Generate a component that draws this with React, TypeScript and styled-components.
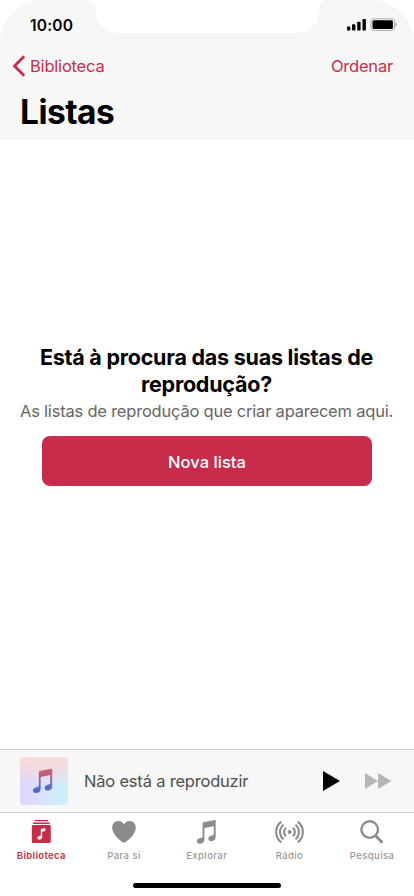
import React from 'react';
import styled, { createGlobalStyle } from 'styled-components';

const accent = '#c72d4b';

const GlobalStyle = createGlobalStyle`
  * { box-sizing: border-box; }
  body { margin: 0; background: #fff; }
`;

const Screen = styled.div`
  width: 414px;
  height: 896px;
  display: flex;
  flex-direction: column;
  background: #fff;
  overflow: hidden;
  font-family: Inter, 'Liberation Sans', sans-serif;
  color: #000;
  svg { display: block; flex: none; }
`;

const Header = styled.header`
  position: relative;
  height: 140px;
  flex: none;
  background: #f7f7f7;
  border-radius: 43px 43px 0 0;
`;

const Notch = styled.svg`
  position: absolute;
  left: 80px;
  top: 0;
`;

const Label = styled.span<{ $size: number; $track?: number; $weight?: number; $color?: string }>`
  font-size: ${p => p.$size}px;
  font-weight: ${p => p.$weight ?? 400};
  letter-spacing: ${p => p.$track ?? 0}px;
  color: ${p => p.$color ?? '#000'};
  white-space: nowrap;
`;

const StatusBar = styled.div`
  height: 50px;
  padding: 0 17px 0 30px;
  display: flex;
  align-items: center;
  justify-content: space-between;
`;

const NavBar = styled.nav`
  height: 32px;
  padding: 0 21px 0 12px;
  display: flex;
  align-items: center;
  justify-content: space-between;
`;

const TextButton = styled.button`
  display: flex;
  align-items: center;
  gap: 4px;
  padding: 0;
  border: 0;
  background: none;
  font-family: inherit;
`;

const Title = styled.h1`
  margin: 0;
  padding-left: 20px;
  font-size: 33.5px;
  line-height: 61px;
  font-weight: 700;
  letter-spacing: -0.55px;
`;

const Content = styled.main`
  height: 609px;
  padding-top: 204px;
  flex: none;
  display: flex;
  flex-direction: column;
  align-items: center;
`;

const Heading = styled.h2`
  margin: 0;
  font-size: 21.5px;
  line-height: 27px;
  font-weight: 700;
  letter-spacing: -0.24px;
  text-align: center;
  white-space: nowrap;
  padding-right: 1px;
`;

const Hint = styled.p`
  margin: 0;
  height: 38px;
  line-height: 26px;
  padding-right: 1px;
`;

const PrimaryButton = styled.button`
  width: 330px;
  height: 50px;
  padding: 1px 0 0;
  border: 0;
  border-radius: 8px;
  background: ${accent};
  font-family: inherit;
`;

const Player = styled.section`
  height: 64px;
  flex: none;
  padding: 0 22px 0 20px;
  border-top: 1px solid #cbcbcb;
  border-bottom: 1px solid #cbcbcb;
  background: #f7f7f7;
  display: flex;
  align-items: center;
`;

const Artwork = styled.div`
  width: 48px;
  height: 48px;
  margin-right: 16px;
  border-radius: 3px;
  background:
    linear-gradient(180deg, #f9dcd6 0%, rgba(246, 218, 222, .85) 22%, rgba(240, 220, 235, 0) 60%),
    linear-gradient(100deg, #dad6fd 5%, #dfdcff 40%, #cbf0fa 90%);
`;

const Controls = styled.div`
  margin-left: auto;
  display: flex;
  align-items: center;
  gap: 25px;
`;

const Tabs = styled.nav`
  height: 70px;
  flex: none;
  display: flex;
`;

const Tab = styled.div`
  width: 82.7px;
  height: 50px;
  padding-top: 5px;
  display: flex;
  flex-direction: column;
  align-items: center;
  gap: 3px;
`;

const TabText = styled.span<{ $active?: boolean; $track: number }>`
  font-size: 9.5px;
  line-height: 13px;
  font-weight: ${p => (p.$active ? 600 : 500)};
  letter-spacing: ${p => p.$track}px;
  color: ${p => (p.$active ? accent : '#999')};
`;

const HomeIndicator = styled.div`
  width: 148px;
  height: 5px;
  flex: none;
  margin-left: 133px;
  border-radius: 3px;
  background: #000;
`;

const notePath =
  'M19.6 .1V17.1C19.6 19.8 17.7 21.1 15.5 21.3C13.4 21.4 12.1 20.1 12.2 18.5C12.3 16.6 13.8 15.8 15.9 15.4C17.2 15.1 17.7 14.8 17.7 13.3V6.2L8.3 8.1V19.5C8.3 22.2 6.3 23.6 4 23.8C2 23.9 .6 22.7 .7 21.1C.8 19.2 2.3 18.4 4.3 18C5.9 17.7 6.5 17.4 6.5 15.9V3.2C6.5 2.6 6.8 2.4 7.4 2.2L18.7 0C19.2 -.1 19.6 -.1 19.6 .1Z';

const LibraryIcon = () => (
  <svg width="28" height="28" viewBox="0 0 28 28" fill={accent}>
    <path d="M7.3 3q0-1 1-1h12q1 0 1 1v.3h-14zM5.8 5.4q0-1 1-1h15q1 0 1 1v.5h-17z" />
    <rect x="4.8" y="7" width="19" height="18" rx="1.6" />
    <path d="M18.3 10.1V13.1L15.2 13.8V18.7C15.2 20.5 14 21.6 12.4 21.6C11.2 21.6 10.4 20.8 10.5 19.9C10.6 18.8 11.5 18.3 12.6 18C13.5 17.8 13.8 17.6 13.8 16.8V11.6Q13.8 11.1 14.2 11L17.9 10.1Q18.3 10 18.3 10.1Z" fill="#fff" />
  </svg>
);
const HeartIcon = () => (
  <svg width="28" height="28" viewBox="0 0 28 28" fill="#8b8b8b">
    <path d="M14 25C12.8 25 2.2 17.1 2.2 9.6C2.2 5.7 4.9 3 8.4 3C10.9 3 13 4.4 14 6.6C15 4.4 17.1 3 19.6 3C23.1 3 25.8 5.7 25.8 9.6C25.8 17.1 15.2 25 14 25Z" />
  </svg>
);
const ExploreIcon = () => (
  <svg width="28" height="28" viewBox="0 0 28 28">
    <path transform="translate(3.1 2)" fill="#8b8b8b" d={notePath} />
  </svg>
);
const RadioIcon = () => (
  <svg width="30" height="28" viewBox="-15.5 -14 30 28" fill="none" stroke="#8b8b8b" strokeWidth="2.1">
    <circle r="2" fill="#8b8b8b" stroke="none" />
    <path d="M-3.4-4.2a5.4 5.4 0 0 0 0 8.4M3.4-4.2a5.4 5.4 0 0 1 0 8.4M-5.9-7.3a9.3 9.3 0 0 0 0 14.6M5.9-7.3a9.3 9.3 0 0 1 0 14.6M-8.2-10.4a13.1 13.1 0 0 0 0 20.8M8.2-10.4a13.1 13.1 0 0 1 0 20.8" />
  </svg>
);
const SearchIcon = () => (
  <svg width="28" height="28" viewBox="0 0 28 28" fill="none" stroke="#8b8b8b" strokeWidth="2.4">
    <circle cx="11.7" cy="11.6" r="8.3" />
    <path d="M17.6 17.7L24.5 24.7" strokeWidth="2.8" />
  </svg>
);

const tabs = [
  { name: 'Biblioteca', icon: <LibraryIcon />, active: true, track: 0.38 },
  { name: 'Para si', icon: <HeartIcon />, track: 0.45 },
  { name: 'Explorar', icon: <ExploreIcon />, track: 0.42 },
  { name: 'Rádio', icon: <RadioIcon />, track: 0.4 },
  { name: 'Pesquisa', icon: <SearchIcon />, track: 0.42 },
];

export default function App() {
  return (
    <Screen>
      <GlobalStyle />
      <Header>
        <Notch width="254" height="34" viewBox="0 0 254 34" fill="#fff">
          <path d="M5 0H249Q239 0 239 11C239 24 230 33.3 214 33.3H40C25 33.3 15.5 24 15.5 11Q15.5 0 5 0Z" />
        </Notch>
        <StatusBar>
          <Label $size={15.5} $weight={600} $track={0.2}>10:00</Label>
          <svg width="50" height="14" viewBox="347 18 50 14">
            <rect x="347" y="26.6" width="3.4" height="4" rx=".8" />
            <rect x="352" y="24.3" width="3.4" height="6.3" rx=".8" />
            <rect x="357.2" y="21.8" width="3.4" height="8.8" rx=".8" />
            <rect x="362.5" y="19" width="3.4" height="11.6" rx=".8" />
            <rect x="371" y="18.8" width="23.6" height="11.6" rx="3" fill="none" stroke="#aaa" />
            <rect x="372.5" y="20.3" width="20.4" height="8.8" rx="1.5" />
            <path d="M395.5 22.6q1.5.6 1.5 2t-1.5 2z" fill="#aaa" />
          </svg>
        </StatusBar>
        <NavBar>
          <TextButton>
            <svg width="14" height="22" viewBox="0 0 14 22" fill="none" stroke={accent} strokeWidth="2.8">
              <path d="M12.2 1.3L2.5 11L12.2 20.7" />
            </svg>
            <Label $size={16.5} $track={-0.2} $color={accent}>Biblioteca</Label>
          </TextButton>
          <TextButton><Label $size={16.5} $track={-0.2} $color={accent}>Ordenar</Label></TextButton>
        </NavBar>
        <Title>Listas</Title>
      </Header>
      <Content>
        <Heading>Está à procura das suas listas de<br />reprodução?</Heading>
        <Hint><Label $size={16.5} $track={-0.21} $color="#666">As listas de reprodução que criar aparecem aqui.</Label></Hint>
        <PrimaryButton><Label $size={16.5} $weight={500} $track={0.05} $color="#fff">Nova lista</Label></PrimaryButton>
      </Content>
      <Player>
        <Artwork>
          <svg width="48" height="48" viewBox="0 0 48 48">
            <defs>
              <linearGradient id="note" x1="0" y1="0" x2="0" y2="1">
                <stop offset="0" stopColor="#cf5e68" />
                <stop offset=".25" stopColor="#bd5f7c" />
                <stop offset=".6" stopColor="#6f6fb4" />
                <stop offset="1" stopColor="#4468d6" />
              </linearGradient>
            </defs>
            <path transform="translate(12.2 11.8) scale(1.02)" fill="url(#note)" d={notePath} />
          </svg>
        </Artwork>
        <Label $size={16.5} $track={-0.2} $color="#505050">Não está a reproduzir</Label>
        <Controls>
          <svg width="17" height="20" viewBox="0 0 17 20"><path d="M0 0L17 10L0 20Z" /></svg>
          <svg width="27" height="18" viewBox="0 0 27 18" fill="#b5b5b5"><path d="M0 1L13 9L0 17ZM13 1L26.5 9L13 17Z" /></svg>
        </Controls>
      </Player>
      <Tabs>
        {tabs.map(t => (
          <Tab key={t.name}>
            {t.icon}
            <TabText $active={t.active} $track={t.track}>{t.name}</TabText>
          </Tab>
        ))}
      </Tabs>
      <HomeIndicator />
    </Screen>
  );
}
